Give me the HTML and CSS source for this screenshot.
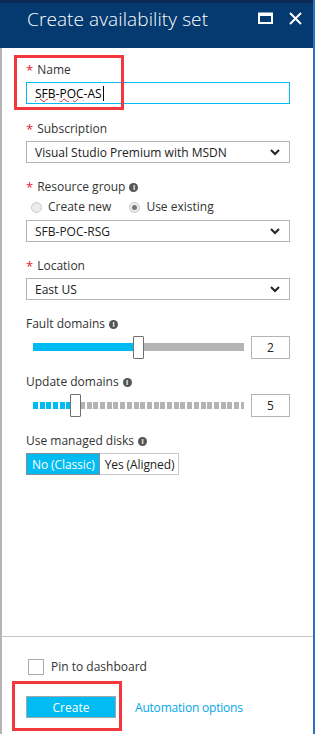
FILE: index.html
```html
<!DOCTYPE html>
<html lang="en">
<head>
    <meta charset="UTF-8">
    <meta name="viewport" content="width=device-width, initial-scale=1.0">
    <title>Create availability set</title>
    <link rel="stylesheet" href="styles.css">
</head>
<body>
    <div class="blade">
        <div class="blade-header">
            <h1>Create availability set</h1>
            <div class="header-actions">
                <svg class="icon-max" width="15" height="12" viewBox="0 0 15 12">
                    <rect x="1" y="1.5" width="13" height="9.5" fill="none" stroke="#fff" stroke-width="2"/>
                    <rect x="1" y="1" width="13" height="3" fill="#fff"/>
                </svg>
                <svg class="icon-close" width="13" height="13" viewBox="0 0 13 13">
                    <path d="M1 1 L12 12 M12 1 L1 12" stroke="#fff" stroke-width="2"/>
                </svg>
            </div>
        </div>

        <div class="blade-content">
            <div class="field field-name">
                <div class="label"><span class="req">*</span> Name</div>
                <div class="textbox focused">
                    <span class="typo">SFB</span>-<span class="typo">POC</span>-AS<span class="caret"></span>
                </div>
                <div class="highlight"></div>
            </div>

            <div class="field">
                <div class="label"><span class="req">*</span> Subscription</div>
                <div class="select">
                    <span>Visual Studio Premium with MSDN</span>
                    <svg class="chevron" width="10" height="7" viewBox="0 0 10 7"><path d="M1 1 L5 5 L9 1" fill="none" stroke="#222" stroke-width="2"/></svg>
                </div>
            </div>

            <div class="field">
                <div class="label"><span class="req">*</span> Resource group <span class="info">i</span></div>
                <div class="radios">
                    <label class="radio"><span class="dot"></span>Create new</label>
                    <label class="radio checked"><span class="dot"></span>Use existing</label>
                </div>
                <div class="select">
                    <span>SFB-POC-RSG</span>
                    <svg class="chevron" width="10" height="7" viewBox="0 0 10 7"><path d="M1 1 L5 5 L9 1" fill="none" stroke="#222" stroke-width="2"/></svg>
                </div>
            </div>

            <div class="field">
                <div class="label"><span class="req">*</span> Location</div>
                <div class="select">
                    <span>East US</span>
                    <svg class="chevron" width="10" height="7" viewBox="0 0 10 7"><path d="M1 1 L5 5 L9 1" fill="none" stroke="#222" stroke-width="2"/></svg>
                </div>
            </div>

            <div class="field field-tight">
                <div class="label">Fault domains <span class="info">i</span></div>
                <div class="slider-row">
                    <div class="slider">
                        <div class="track"></div>
                        <div class="fill" style="width: 100px"></div>
                        <div class="thumb" style="left: 100px"></div>
                    </div>
                    <div class="number">2</div>
                </div>
            </div>

            <div class="field">
                <div class="label">Update domains <span class="info">i</span></div>
                <div class="slider-row">
                    <div class="slider segmented">
                        <div class="track"></div>
                        <div class="fill" style="width: 37px"></div>
                        <div class="thumb" style="left: 37px"></div>
                    </div>
                    <div class="number">5</div>
                </div>
            </div>

            <div class="field">
                <div class="label">Use managed disks <span class="info">i</span></div>
                <div class="toggle">
                    <span class="opt active">No (Classic)</span>
                    <span class="opt">Yes (Aligned)</span>
                </div>
            </div>
        </div>

        <div class="blade-footer">
            <label class="checkbox"><span class="box"></span>Pin to dashboard</label>
            <div class="actions">
                <button class="btn-create">Create</button>
                <a class="link" href="#">Automation options</a>
                <div class="highlight"></div>
            </div>
        </div>
    </div>
</body>
</html>
```

FILE: styles.css
```css
* {
    margin: 0;
    padding: 0;
    box-sizing: border-box;
}

body {
    width: 315px;
    height: 734px;
    overflow: hidden;
    background: #fff;
    font-family: 'Open Sans', 'Noto Sans', sans-serif;
    font-size: 12px;
    color: #333;
}

.blade {
    height: 734px;
    display: flex;
    flex-direction: column;
    border-right: 2px solid #2a72c4;
}

/* Header */
.blade-header {
    height: 48px;
    background: #043a70;
    border-top: 3px solid #0b2b55;
    display: flex;
    justify-content: space-between;
    padding: 3px 11px 0 27px;
}

.blade-header h1 {
    color: #fff;
    font-weight: 300;
    font-size: 19px;
    line-height: 26px;
    letter-spacing: 0.1px;
}

.header-actions {
    display: flex;
    gap: 16px;
    padding-top: 6px;
}

.icon-close {
    margin-top: -0.5px;
}

/* Content */
.blade-content {
    flex: 1;
    border-left: 2px solid #b4b4b4;
    padding: 14px 23px 0 24px;
    display: flex;
    flex-direction: column;
    gap: 16px;
}

.field {
    position: relative;
}

.field-name {
    margin-bottom: 1px;
}

.field-tight {
    margin-bottom: -1px;
}

.label {
    line-height: 16px;
    margin-bottom: 4px;
    color: #333;
    display: flex;
    align-items: center;
}

.req {
    color: #e8212c;
    margin-right: 4px;
    font-size: 13px;
}

.info {
    display: inline-flex;
    justify-content: center;
    align-items: center;
    width: 9px;
    height: 9px;
    margin-left: 4px;
    border-radius: 50%;
    background: #555;
    color: #fff;
    font-size: 7px;
    font-weight: 700;
    line-height: 1;
}

.textbox,
.select {
    height: 22px;
    border: 1px solid #b4b4b4;
    padding: 0 9px 0 8px;
    display: flex;
    align-items: center;
    color: #222;
    font-size: 12px;
}

.textbox.focused {
    border-color: #00bcf2;
    color: #000;
}

.typo {
    text-decoration: underline wavy #e8212c;
    text-decoration-thickness: 1px;
    text-underline-offset: 0;
}

.caret {
    display: inline-block;
    width: 1px;
    height: 15px;
    background: #000;
    margin-left: 1px;
}

.select {
    justify-content: space-between;
}

.highlight {
    position: absolute;
    left: -12px;
    top: -7px;
    width: 110px;
    height: 55px;
    border: 3px solid #f2383d;
    pointer-events: none;
}

/* Radios */
.radios {
    display: flex;
    gap: 18px;
    padding-left: 5px;
    margin: 1px 0 5px;
    line-height: 16px;
}

.radio {
    display: flex;
    align-items: center;
    gap: 6px;
}

.dot {
    width: 11px;
    height: 11px;
    border-radius: 50%;
    border: 1px solid #c8c8c8;
    background: #ececec;
    position: relative;
}

.radio.checked .dot::after {
    content: '';
    position: absolute;
    left: 2px;
    top: 2px;
    width: 5px;
    height: 5px;
    border-radius: 50%;
    background: #777;
}

/* Sliders */
.slider-row {
    display: flex;
    align-items: center;
    justify-content: space-between;
    height: 23px;
}

.slider {
    position: relative;
    width: 211px;
    height: 23px;
    margin-left: 7px;
}

.slider .track {
    position: absolute;
    left: 0;
    right: 0;
    top: 7px;
    height: 8px;
    background: #b4b4b4;
}

.slider .fill {
    position: absolute;
    left: 0;
    top: 7px;
    height: 8px;
    background: #00bcf2;
}

.slider.segmented .track,
.slider.segmented .fill {
    top: 8px;
    height: 7px;
}

.slider.segmented .track {
    background: repeating-linear-gradient(90deg, #b4b4b4 0, #b4b4b4 5px, #fff 5px, #fff 6.7px);
}

.slider.segmented .fill {
    background: repeating-linear-gradient(90deg, #00bcf2 0, #00bcf2 5px, #fff 5px, #fff 6.7px);
}

.thumb {
    position: absolute;
    top: 0;
    width: 11px;
    height: 23px;
    background: #fff;
    border: 1px solid #707070;
    border-radius: 1px;
}

.number {
    width: 39px;
    height: 23px;
    border: 1px solid #b4b4b4;
    display: flex;
    align-items: center;
    justify-content: center;
    color: #222;
}

/* Toggle */
.toggle {
    display: flex;
    height: 22px;
}

.opt {
    display: flex;
    align-items: center;
    padding: 0 4px 0 5px;
    border: 1px solid #c8c8c8;
    color: #222;
    font-size: 12px;
    letter-spacing: -0.1px;
}

.opt.active {
    background: #00bcf2;
    border-color: #8a8a8a;
    color: #fff;
    padding: 0 4px 0 5px;
}

.opt + .opt {
    border-left: none;
}

/* Footer */
.blade-footer {
    height: 98px;
    border-top: 1px solid #c8c8c8;
    border-left: 2px solid #b4b4b4;
    padding: 22px 0 0 26px;
}

.checkbox {
    display: flex;
    align-items: center;
    gap: 7px;
    line-height: 16px;
    color: #333;
}

.box {
    width: 16px;
    height: 16px;
    border: 1px solid #aaa;
    background: #fff;
}

.actions {
    position: relative;
    display: flex;
    align-items: center;
    gap: 19px;
    margin-top: 21px;
    margin-left: -2px;
}

.actions .highlight {
    left: -14px;
    top: -15px;
    height: 50px;
}

.btn-create {
    width: 90px;
    height: 22px;
    background: #00bcf2;
    border: 1px solid #a6a6a6;
    color: #fff;
    font-family: inherit;
    font-size: 12px;
}

.link {
    color: #00a8ea;
    text-decoration: none;
    letter-spacing: -0.2px;
}
```
